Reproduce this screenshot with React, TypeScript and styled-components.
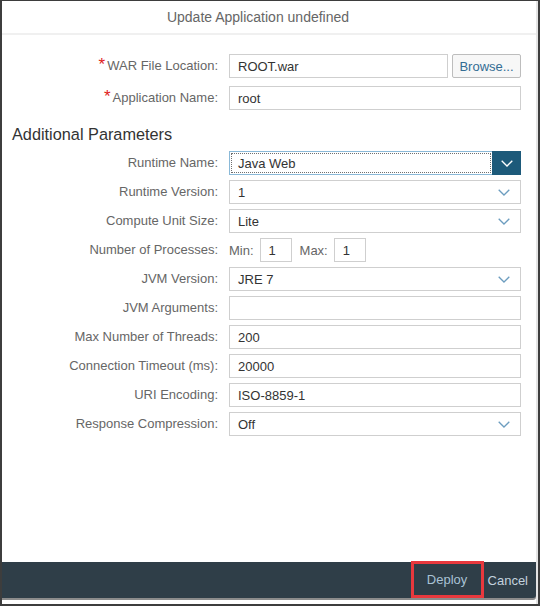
import React from 'react';
import styled, { createGlobalStyle } from 'styled-components';

const GlobalStyle = createGlobalStyle`
  html, body { margin: 0; padding: 0; background: #fff; }
  body { font-family: "Liberation Sans", Arial, sans-serif; }
  * { box-sizing: border-box; }
`;

const Frame = styled.div`
  width: 540px;
  height: 606px;
  border: 2px solid #3d3d3d;
  border-top-width: 1px;
  display: flex;
  flex-direction: column;
  background: #fff;
`;

const Dialog = styled.div`
  flex: 1;
  display: flex;
  flex-direction: column;
  border-right: 2px solid #e4e4e4;
`;

const Header = styled.div`
  height: 34px;
  border-bottom: 2px solid #f0f0f0;
  display: flex;
  align-items: center;
  justify-content: center;
  padding-right: 22px;
  font-size: 14px;
  color: #666;
`;

const Body = styled.div`
  flex: 1;
  padding-top: 19px;
`;

const Grid = styled.div<{ $gap: number }>`
  display: grid;
  grid-template-columns: 216px 292px;
  column-gap: 11px;
  row-gap: ${p => p.$gap}px;
  grid-auto-rows: 24px;
`;

const Label = styled.label`
  text-align: right;
  font-size: 13px;
  line-height: 24px;
  color: #666;
  white-space: nowrap;
`;

const Req = styled.span`
  color: #e0201b;
  font-size: 17px;
  line-height: 0;
  margin-right: 2px;
`;

const Heading = styled.h2`
  margin: 13px 0 6px 10px;
  font-size: 16.3px;
  line-height: 22px;
  font-weight: normal;
  color: #333;
`;

const Field = styled.div<{ $w?: number }>`
  height: 24px;
  ${p => (p.$w ? `width: ${p.$w}px;` : 'flex: 1;')}
  border: 1px solid #cfcfcf;
  background: #fff;
  display: flex;
  align-items: center;
  padding-left: 8px;
  font-size: 13px;
  color: #333;
  white-space: nowrap;
`;

const SelectBox = styled.div<{ $focused?: boolean }>`
  height: 24px;
  border: 1px solid ${p => (p.$focused ? '#8ab9d8' : '#cfcfcf')};
  background: #fff;
  display: flex;
  align-items: stretch;
  font-size: 13px;
  color: #333;
`;

const SelectText = styled.div<{ $focused?: boolean }>`
  flex: 1;
  display: flex;
  align-items: center;
  padding-left: 8px;
  ${p => (p.$focused ? 'outline: 1px dotted #6f6f6f; outline-offset: -2px;' : '')}
`;

const Arrow = styled.div<{ $focused?: boolean }>`
  width: ${p => (p.$focused ? 29 : 28)}px;
  margin: ${p => (p.$focused ? '-1px -1px -1px 0' : '0')};
  background: ${p => (p.$focused ? '#1d5a7a' : 'transparent')};
  color: ${p => (p.$focused ? '#fff' : '#6c9dbf')};
  display: flex;
  align-items: center;
  justify-content: center;
  padding-right: ${p => (p.$focused ? 0 : 4)}px;
`;

const Row = styled.div`
  display: flex;
  align-items: center;
`;

const BrowseButton = styled.button`
  height: 24px;
  width: 69px;
  margin-left: 4px;
  border: 1px solid #bdbdbd;
  border-radius: 2px;
  background: #f7f7f7;
  color: #346d94;
  font-family: inherit;
  font-size: 13px;
  padding: 0;
`;

const SmallLabel = styled.span<{ $ml?: number }>`
  font-size: 13px;
  color: #666;
  margin-left: ${p => p.$ml ?? 0}px;
  margin-right: 6px;
`;

const Footer = styled.div`
  height: 36px;
  margin-bottom: 6px;
  background: #2f3e48;
  border-bottom-right-radius: 3px;
  box-shadow: 0 2px 0 #8c8c8c;
  display: flex;
  justify-content: flex-end;
  align-items: center;
`;

const FooterButton = styled.button<{ $marked?: boolean }>`
  height: ${p => (p.$marked ? 37 : 36)}px;
  ${p => (p.$marked ? 'align-self: flex-start; margin-top: -1px; width: 73px; border: 3px solid #e8383d;' : 'border: none; padding: 0 8px 0 4px;')}
  background: transparent;
  font-family: inherit;
  font-size: 13px;
  color: ${p => (p.$marked ? '#a9c2d5' : '#c3d2de')};
`;

const Chevron = () => (
  <svg width="12" height="7" viewBox="0 0 12 7">
    <polyline points="0.7,0.7 6,6 11.3,0.7" fill="none" stroke="currentColor" strokeWidth="1.3" />
  </svg>
);

const Select = ({ value, focused }: { value: string; focused?: boolean }) => (
  <SelectBox $focused={focused}>
    <SelectText $focused={focused}>{value}</SelectText>
    <Arrow $focused={focused}>
      <Chevron />
    </Arrow>
  </SelectBox>
);

const textRows: [string, string][] = [
  ['JVM Arguments:', ''],
  ['Max Number of Threads:', '200'],
  ['Connection Timeout (ms):', '20000'],
  ['URI Encoding:', 'ISO-8859-1'],
];

export default function App() {
  return (
    <>
      <GlobalStyle />
      <Frame>
        <Dialog>
          <Header>Update Application undefined</Header>
          <Body>
            <Grid $gap={8}>
              <Label>
                <Req>*</Req>WAR File Location:
              </Label>
              <Row>
                <Field>ROOT.war</Field>
                <BrowseButton>Browse...</BrowseButton>
              </Row>
              <Label>
                <Req>*</Req>Application Name:
              </Label>
              <Field>root</Field>
            </Grid>
            <Heading>Additional Parameters</Heading>
            <Grid $gap={5}>
              <Label>Runtime Name:</Label>
              <Select value="Java Web" focused />
              <Label>Runtime Version:</Label>
              <Select value="1" />
              <Label>Compute Unit Size:</Label>
              <Select value="Lite" />
              <Label>Number of Processes:</Label>
              <Row>
                <SmallLabel>Min:</SmallLabel>
                <Field $w={32}>1</Field>
                <SmallLabel $ml={8}>Max:</SmallLabel>
                <Field $w={32}>1</Field>
              </Row>
              <Label>JVM Version:</Label>
              <Select value="JRE 7" />
              {textRows.map(([label, value]) => (
                <React.Fragment key={label}>
                  <Label>{label}</Label>
                  <Field>{value}</Field>
                </React.Fragment>
              ))}
              <Label>Response Compression:</Label>
              <Select value="Off" />
            </Grid>
          </Body>
          <Footer>
            <FooterButton $marked>Deploy</FooterButton>
            <FooterButton>Cancel</FooterButton>
          </Footer>
        </Dialog>
      </Frame>
    </>
  );
}
